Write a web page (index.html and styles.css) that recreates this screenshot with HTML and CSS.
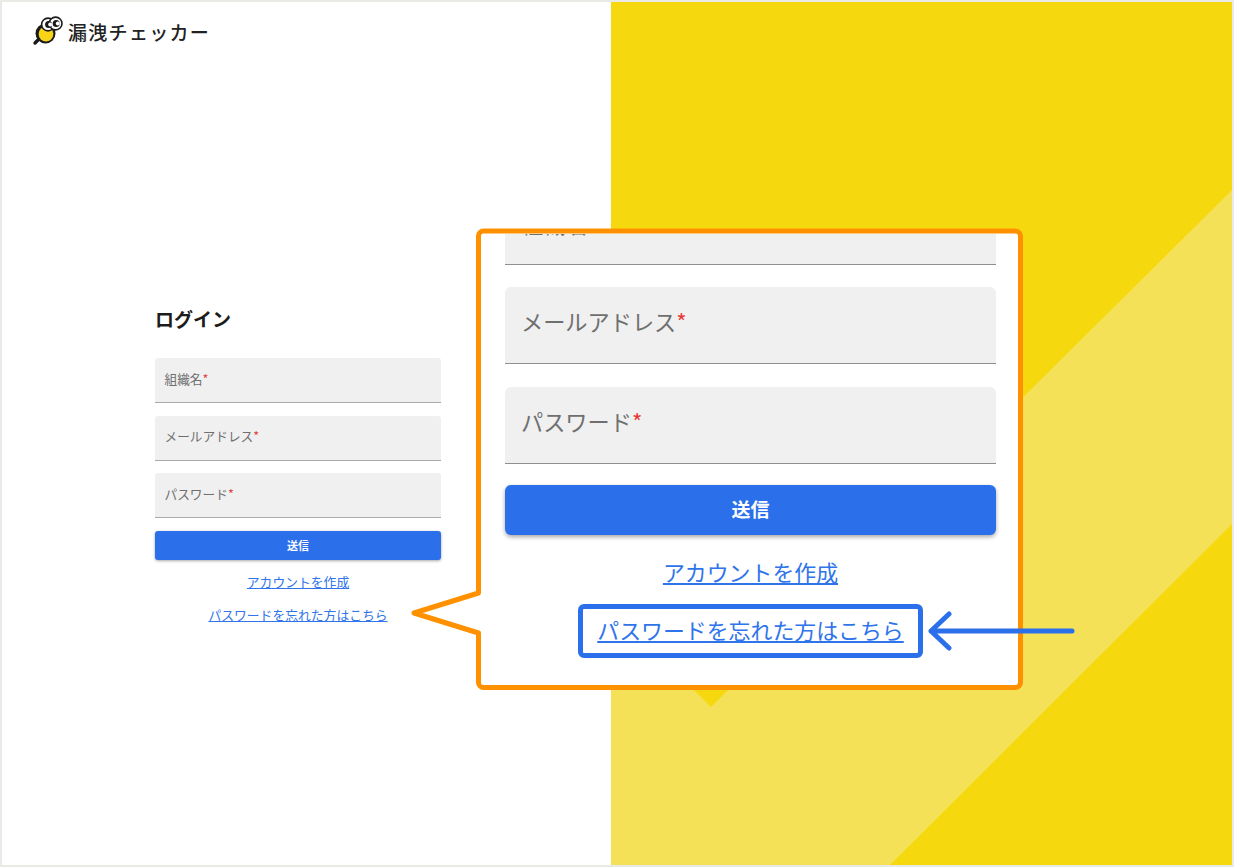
FILE: index.html
```html
<!DOCTYPE html>
<html lang="ja">

<head>
    <meta charset="UTF-8">
    <meta name="viewport" content="width=device-width, initial-scale=1.0">
    <title>ログイン</title>
    <link rel="stylesheet" href="styles.css">
</head>

<body>
    <div class="page">
        <div class="shell">
            <div class="left">
                <div class="logo">
                    <svg class="logo-mark" width="38" height="32" viewBox="0 0 38 32">
                        <path d="M4 27 L9 22" stroke="#1a1a1a" stroke-width="3.4" stroke-linecap="round" />
                        <circle cx="14.5" cy="17.5" r="10" fill="#1a1a1a" />
                        <circle cx="15" cy="18" r="7.4" fill="#f7d417" />
                        <circle cx="17" cy="8.5" r="6.4" fill="#fff" stroke="#1a1a1a" stroke-width="1.6" />
                        <circle cx="24.6" cy="7.5" r="6.4" fill="#fff" stroke="#1a1a1a" stroke-width="1.6" />
                        <circle cx="17.6" cy="8.5" r="3.5" fill="#1a1a1a" />
                        <circle cx="25.2" cy="7.5" r="3.5" fill="#1a1a1a" />
                        <circle cx="19.2" cy="8.5" r="2" fill="#fff" />
                        <circle cx="26.8" cy="7.5" r="2" fill="#fff" />
                    </svg>
                    <span class="logo-text">漏洩チェッカー</span>
                </div>
                <div class="login">
                    <h1 class="login-title">ログイン</h1>
                    <div class="field">組織名<span class="req">*</span></div>
                    <div class="field">メールアドレス<span class="req">*</span></div>
                    <div class="field">パスワード<span class="req">*</span></div>
                    <button class="submit">送信</button>
                    <div class="links">
                        <a class="link" href="#">アカウントを作成</a>
                        <a class="link" href="#">パスワードを忘れた方はこちら</a>
                    </div>
                </div>
            </div>
            <div class="right">
                <svg class="right-bg" width="621" height="863" viewBox="611 2 621 863">
                    <polygon points="1232,190 711,707 611,607 611,865 890,865 1232,524" fill="#f4e158" />
                </svg>
            </div>
        </div>

        <!-- zoomed callout -->
        <div class="callout">
            <svg class="callout-shape" width="620" height="468" viewBox="0 0 620 468">
                <path d="M75.5 5 H607.5 a5 5 0 0 1 5 5 V456.5 a5 5 0 0 1 -5 5 H75.5 a5 5 0 0 1 -5 -5 V407 L6 387 L70.5 367 V10 a5 5 0 0 1 5 -5 Z"
                    fill="#fff" stroke="#ff9100" stroke-width="5" stroke-linejoin="round" />
            </svg>
            <div class="callout-body">
                <div class="big-field big-field-first">組織名<span class="req">*</span></div>
                <div class="big-field">メールアドレス<span class="req">*</span></div>
                <div class="big-field">パスワード<span class="req">*</span></div>
                <button class="big-submit">送信</button>
                <div class="big-links">
                    <a class="big-link" href="#">アカウントを作成</a>
                    <div class="highlight"><a class="big-link" href="#">パスワードを忘れた方はこちら</a></div>
                </div>
            </div>
        </div>

        <svg class="arrow" width="156" height="44" viewBox="0 0 156 44">
            <path d="M149 22 H8 M26 5 L8 22 L26 39" fill="none" stroke="#2b70ea" stroke-width="5" stroke-linecap="round" stroke-linejoin="round" />
        </svg>
    </div>
</body>

</html>
```

FILE: styles.css
```css
* {
    box-sizing: border-box;
}
body {
    margin: 0;
    background: #fff;
    font-family: "Noto Sans CJK JP", "Noto Sans", sans-serif;
}
.page {
    position: relative;
    width: 1234px;
    height: 867px;
    overflow: hidden;
}
.shell {
    display: flex;
    height: 100%;
    border: 2px solid #e9e9e6;
}
.left {
    width: 609px;
    background: #fff;
}
.right {
    flex: 1;
    position: relative;
    background: #f5d80e;
}
.right-bg {
    position: absolute;
    left: 0;
    top: 0;
}

/* logo */
.logo {
    display: flex;
    align-items: center;
    height: 32px;
    margin-top: 14px;
    padding-left: 29px;
}
.logo-mark {
    flex: none;
    margin-right: -1px;
}
.logo-text {
    margin-top: -2px;
    font-size: 19px;
    font-weight: 500;
    letter-spacing: 1.3px;
    color: #222;
}

/* login form */
.login {
    width: 286px;
    margin: 257px 0 0 153px;
}
.login-title {
    margin: 0 0 25px;
    font-size: 19px;
    line-height: 28px;
    font-weight: 700;
    color: #1c1c1c;
}
.field {
    display: flex;
    align-items: center;
    height: 45px;
    margin-bottom: 12.5px;
    padding: 0 0 4px 9.5px;
    background: #f0f0f0;
    border-bottom: 1px solid #aaa;
    border-radius: 3px 3px 0 0;
    font-size: 12.7px;
    color: #6f6f6f;
}
.req {
    color: #e53935;
}
.submit {
    display: block;
    width: 100%;
    height: 29px;
    padding: 0;
    border: 0;
    border-radius: 3px;
    background: #2b70ea;
    box-shadow: 0 1px 3px rgba(0, 0, 0, 0.35);
    color: #fff;
    font-family: inherit;
    font-size: 11px;
    font-weight: 700;
}
.links {
    display: flex;
    flex-direction: column;
    align-items: center;
    gap: 13px;
    margin-top: 12px;
}
.link {
    font-size: 12.8px;
    line-height: 20px;
    color: #2f74ea;
}

/* callout */
.callout {
    position: absolute;
    left: 408px;
    top: 226px;
    width: 620px;
    height: 468px;
}
.callout-shape {
    display: block;
}
.callout-body {
    position: absolute;
    left: 73px;
    top: 8px;
    width: 537px;
    height: 452px;
    padding-left: 24px;
    overflow: hidden;
}
.big-field {
    display: flex;
    align-items: center;
    width: 491px;
    height: 77px;
    margin-bottom: 22.5px;
    padding: 0 0 8px 16px;
    background: #f0f0f0;
    border-bottom: 1px solid #8f8f8f;
    border-radius: 6px 6px 0 0;
    font-size: 22.2px;
    color: #6f6f6f;
}
.big-field-first {
    margin-top: -46.5px;
    padding-bottom: 5px;
}
.big-submit {
    display: block;
    width: 491px;
    height: 50px;
    margin-top: -1px;
    padding: 0 0 3px;
    border: 0;
    border-radius: 6px;
    background: #2b70ea;
    box-shadow: 0 2px 4px rgba(0, 0, 0, 0.35);
    color: #fff;
    font-family: inherit;
    font-size: 19px;
    font-weight: 700;
}
.big-links {
    display: flex;
    flex-direction: column;
    align-items: center;
    width: 491px;
    margin-top: 21px;
}
.big-link {
    font-size: 21.9px;
    line-height: 32px;
    color: #2f74ea;
}
.highlight {
    margin-top: 16px;
    padding: 5px 14px 0;
    width: 345px;
    height: 54px;
    border: 5px solid #2b70ea;
    border-radius: 6px;
    text-align: center;
}

.arrow {
    position: absolute;
    left: 923px;
    top: 609px;
}
```
